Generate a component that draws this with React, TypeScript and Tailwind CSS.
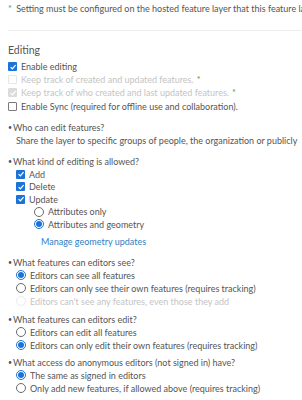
import React from 'react';

function Box({ checked, disabled }: { checked?: boolean; disabled?: boolean }) {
    if (checked) {
        return (
            <span className={`w-[9px] h-[9px] rounded-[1px] flex items-center justify-center shrink-0 ${disabled ? 'bg-[#dcdcdc]' : 'bg-[#1b73d8]'}`}>
                <svg viewBox="0 0 10 10" className="w-[8px] h-[8px]">
                    <path d="M2 5.2 L4.2 7.4 L8.2 2.6" fill="none" stroke="white" strokeWidth="1.6" />
                </svg>
            </span>
        );
    }
    return <span className={`w-[9px] h-[9px] rounded-[1px] border shrink-0 ${disabled ? 'border-[#e6e6e6]' : 'border-[#7a7a7a]'}`}></span>;
}

function Radio({ checked, disabled }: { checked?: boolean; disabled?: boolean }) {
    if (checked) {
        return (
            <span className="w-[10px] h-[10px] rounded-full border border-[#1b73d8] flex items-center justify-center shrink-0">
                <span className="w-[6px] h-[6px] rounded-full bg-[#1b73d8]"></span>
            </span>
        );
    }
    return <span className={`w-[10px] h-[10px] rounded-full border shrink-0 ${disabled ? 'border-[#ececec]' : 'border-[#6a6a6a]'}`}></span>;
}

function Star() {
    return <span className="text-[#5a9a3a] ml-[3px]">*</span>;
}

function Row({ children, control, disabled, className = '', tight }: { children: React.ReactNode; control: React.ReactNode; disabled?: boolean; className?: string; tight?: boolean }) {
    return (
        <div className={`flex items-center gap-[4px] whitespace-nowrap ${tight ? 'h-[12.5px]' : 'h-[13px]'} ${disabled ? 'text-[#c4c4c4]' : ''} ${className}`}>
            {control}
            <span>{children}</span>
        </div>
    );
}

function Question({ children }: { children: React.ReactNode }) {
    return (
        <div className="flex items-center h-[13px] whitespace-nowrap">
            <span className="w-[5px] text-[7px] leading-none">•</span>
            <span>{children}</span>
        </div>
    );
}

export default function App() {
    return (
        <div className="w-[302px] h-[400px] overflow-hidden bg-white text-[#555555] text-[9px] leading-[13px] pl-[8px] pt-[2px]" style={{ fontFamily: 'Lato, "Open Sans", sans-serif' }}>
            <div className="h-[13px] whitespace-nowrap overflow-hidden">
                <span className="text-[#5a9a3a] mr-[2px]">*</span> Setting must be configured on the hosted feature layer that this feature la
            </div>
            <div className="border-t border-[#eeeeee] mt-[15px]"></div>

            <div className="text-[10.5px] mt-[13px] h-[13px]">Editing</div>
            <div className="mt-[3px]">
                <Row control={<Box checked />}>Enable editing</Row>
                <Row control={<Box disabled />} disabled>Keep track of created and updated features.<Star /></Row>
                <Row control={<Box checked disabled />} disabled>Keep track of who created and last updated features.<Star /></Row>
                <Row control={<Box />} className="mt-[1px]">Enable Sync (required for offline use and collaboration).</Row>
            </div>

            <div className="mt-[8px]">
                <Question>Who can edit features?</Question>
                <div className="pl-[8px] h-[13px] whitespace-nowrap">Share the layer to specific groups of people, the organization or publicly</div>
            </div>

            <div className="mt-[8px]">
                <Question>What kind of editing is allowed?</Question>
                <div className="pl-[8px]">
                    <Row tight control={<Box checked />}>Add</Row>
                    <Row tight control={<Box checked />}>Delete</Row>
                    <Row tight control={<Box checked />}>Update</Row>
                    <div className="pl-[18px]">
                        <Row tight control={<Radio />}>Attributes only</Row>
                        <Row tight control={<Radio checked />}>Attributes and geometry</Row>
                        <div className="pl-[7px] mt-[4px] h-[13px] text-[#2e7fc4]">Manage geometry updates</div>
                    </div>
                </div>
            </div>

            <div className="mt-[8px]">
                <Question>What features can editors see?</Question>
                <div className="pl-[8px]">
                    <Row control={<Radio checked />}>Editors can see all features</Row>
                    <Row control={<Radio />}>Editors can only see their own features (requires tracking)</Row>
                    <Row control={<Radio disabled />} disabled>Editors can't see any features, even those they add</Row>
                </div>
            </div>

            <div className="mt-[5px]">
                <Question>What features can editors edit?</Question>
                <div className="pl-[8px]">
                    <Row control={<Radio />}>Editors can edit all features</Row>
                    <Row control={<Radio checked />}>Editors can only edit their own features (requires tracking)</Row>
                </div>
            </div>

            <div className="mt-[4px]">
                <Question>What access do anonymous editors (not signed in) have?</Question>
                <div className="pl-[8px]">
                    <Row control={<Radio checked />}>The same as signed in editors</Row>
                    <Row control={<Radio />}>Only add new features, if allowed above (requires tracking)</Row>
                </div>
            </div>
        </div>
    );
}
